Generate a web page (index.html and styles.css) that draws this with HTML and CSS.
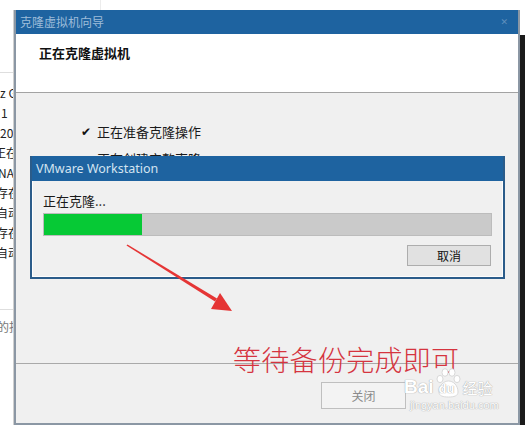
FILE: index.html
```html
<!DOCTYPE html>
<html lang="zh-CN">
<head>
<meta charset="utf-8">
<title>克隆虚拟机向导</title>
<link rel="stylesheet" href="styles.css">
</head>
<body>
<div class="bgapp">
  <div class="bg-rule"></div>
  <div class="bg-lines">
    <div class="l0">z G</div>
    <div class="l1">1</div>
    <div class="l0">20 (</div>
    <div class="l2">正在</div>
    <div class="l3">NAT</div>
    <div class="l4">存在</div>
    <div class="l4">自动</div>
    <div class="l4">存在</div>
    <div class="l4">自动</div>
  </div>
  <div class="bg-rule r2"></div>
  <div class="bg-foot">的指</div>
</div>
<div class="bgtop-line"></div>
<div class="shadow-win"></div>

<div class="wizard">
  <div class="wz-title"><span>克隆虚拟机向导</span><span class="wz-close">✕</span></div>
  <div class="wz-header">正在克隆虚拟机</div>
  <div class="wz-body">
    <div class="step"><span class="check">✔</span>正在准备克隆操作</div>
    <div class="step step2"><span class="check"></span>正在创建完整克隆</div>
  </div>
  <div class="wz-footer">
    <button class="btn-disabled" disabled>关闭</button>
  </div>
</div>

<div class="vmdlg">
  <div class="vm-title">VMware Workstation</div>
  <div class="vm-body">
    <div class="vm-msg">正在克隆...</div>
    <div class="pbar"><div class="pfill" style="width:98px"></div></div>
    <div class="vm-actions"><button class="btn">取消</button></div>
  </div>
</div>

<svg class="arrow" width="525" height="430" viewBox="0 0 525 430">
  <polygon points="126.5,245.5 127.5,244.5 217,298.5 215,301.5" fill="#e53535"/>
  <polygon points="232,311 220,293 211,309" fill="#e53535"/>
</svg>

<div class="note">等待备份完成即可</div>

<div class="watermark">
  <div class="wm-row">
    <span class="wm-bai">Bai</span>
    <span class="wm-paw">
      <svg width="26" height="30" viewBox="0 0 26 30">
        <ellipse cx="5" cy="11" rx="3" ry="3.6" fill="#fff" stroke="#d0d0d0" stroke-width="0.8"/>
        <ellipse cx="10" cy="4.5" rx="3" ry="3.8" fill="#fff" stroke="#d0d0d0" stroke-width="0.8"/>
        <ellipse cx="17" cy="4.5" rx="3" ry="3.8" fill="#fff" stroke="#d0d0d0" stroke-width="0.8"/>
        <ellipse cx="22" cy="11" rx="3" ry="3.6" fill="#fff" stroke="#d0d0d0" stroke-width="0.8"/>
        <path d="M4 24 C4 17 9 13 13.5 13 C18 13 23 17 23 24 C23 28 19 29 13.5 29 C8 29 4 28 4 24 Z" fill="#fff" stroke="#d0d0d0" stroke-width="0.8"/>
      </svg>
      <span class="wm-du">du</span>
    </span>
    <span class="wm-jy">经验</span>
  </div>
  <div class="wm-url">jingyan.baidu.com</div>
</div>
</body>
</html>
```
FILE: styles.css
```css
* { box-sizing: border-box; margin: 0; padding: 0; }
html, body { width: 525px; height: 430px; overflow: hidden; background: #fff; }
body { position: relative; font-family: "Noto Sans CJK SC", "Noto Sans", sans-serif; color: #1a1a1a; }

/* background application (window behind) */
.bgapp {
  position: absolute; left: 0; top: 0; width: 14px; height: 430px;
  overflow: hidden; padding-top: 72px;
  font-size: 12px; line-height: 20px; color: #222;
}
.bg-rule { width: 14px; border-top: 1px solid #dedede; }
.bg-rule.r2 { margin-top: 46px; }
.bg-lines { margin-top: 10px; }
.bg-lines div, .bg-foot { white-space: nowrap; }
.l0 { margin-left: 0; }
.l1 { margin-left: 1px; }
.l2 { margin-left: -6px; }
.l3 { margin-left: -2px; }
.l4 { margin-left: -4px; }
.bg-foot { margin-top: 7px; margin-left: -3px; color: #777; }
.bgtop-line { position: absolute; left: 100px; top: 0; width: 1px; height: 10px; background: #ececec; }
.shadow-win { position: absolute; left: 519px; top: 35px; width: 6px; height: 390px; background: #1b1b1b; }

/* main wizard window */
.wizard {
  position: absolute; left: 14px; top: 10px; width: 506px; height: 415px;
  border: 2px solid #8b97a4; border-top: 0;
  box-shadow: -1px 0 0 #d0d0d0;
  background: #f0f0f0; display: flex; flex-direction: column;
}
.wz-title {
  height: 24px; background: #1e63a0; color: #9dbcd9;
  font-size: 12px; line-height: 24px; padding: 0 10px 0 4px;
  display: flex; justify-content: space-between;
}
.wz-close { font-family: "DejaVu Sans", sans-serif; font-size: 9px; color: #5f8fbd; }
.wz-header {
  height: 59px; background: #fff; border-bottom: 1px solid #a3a3a3;
  padding: 10px 0 0 23px; font-size: 13px; line-height: 18px; font-weight: 700; color: #111;
}
.wz-body { flex: 1; padding: 28px 0 0 65px; font-size: 13px; line-height: 22px; color: #1a1a1a; }
.step { display: flex; align-items: center; }
.step2 { margin-top: 5px; }
.check { width: 16px; font-family: "DejaVu Sans", sans-serif; font-size: 12px; font-weight: 700; color: #111; }
.wz-footer { height: 60px; border-top: 1px solid #a9a9a9; padding: 18px 0 0 305px; }
.btn-disabled {
  width: 85px; height: 27px; background: #f3f3f3; border: 1px solid #bfbfbf;
  font-family: "Noto Sans CJK SC", sans-serif; font-size: 12px; color: #8a8a8a;
}

/* VMware progress dialog */
.vmdlg {
  position: absolute; left: 30px; top: 156px; width: 475px; height: 123px;
  border: 2px solid #2b5c8a; border-top: 0; background: #f0f0f0;
  display: flex; flex-direction: column;
}
.vm-title {
  height: 25px; background: #1e63a0; color: #d3e3f1;
  font-family: "Noto Sans", sans-serif; font-size: 12.5px; line-height: 25px; padding-left: 4px;
}
.vm-body { flex: 1; border: 1px solid #fdfdfd; border-top: 0; padding: 10px 10px 0 10px; display: flex; flex-direction: column; }
.vm-msg { font-size: 13px; line-height: 20px; color: #1a1a1a; }
.pbar { margin-top: 2px; height: 23px; border: 1px solid #bcbcbc; background: #cacaca; }
.pfill { height: 100%; background: #06c935; }
.vm-actions { margin-top: 9px; display: flex; justify-content: flex-end; padding-right: 1px; }
.btn {
  width: 84px; height: 21px; background: #e1e1e1; border: 1px solid #adadad;
  font-family: "Noto Sans CJK SC", sans-serif; font-size: 12px; color: #111; line-height: 17px;
}

/* annotations */
.arrow { position: absolute; left: 0; top: 0; pointer-events: none; }
.note {
  position: absolute; left: 233px; top: 344px;
  font-size: 28px; line-height: 30px; font-weight: 300; color: #d5343f; letter-spacing: 0.3px;
}
.watermark { position: absolute; left: 404px; top: 368px; color: #fff; }
.wm-row { display: flex; align-items: flex-end; }
.wm-bai, .wm-jy, .wm-du, .wm-url { text-shadow: 0 0 1px #a8a8a8, 0 0 1px #a8a8a8; }
.wm-bai { font-family: "Liberation Sans", sans-serif; font-weight: 700; font-size: 19px; line-height: 22px; }
.wm-paw { position: relative; width: 26px; height: 30px; margin: 0 2px 0 1px; }
.wm-paw svg { display: block; }
.wm-du {
  position: absolute; left: 4px; top: 13px; font-family: "Liberation Sans", sans-serif;
  font-weight: 700; font-size: 13px; line-height: 15px; color: #fff;
}
.wm-jy { font-size: 15px; line-height: 20px; }
.wm-url { font-family: "Liberation Sans", sans-serif; font-size: 11px; line-height: 14px; margin-left: 6px; }
```
